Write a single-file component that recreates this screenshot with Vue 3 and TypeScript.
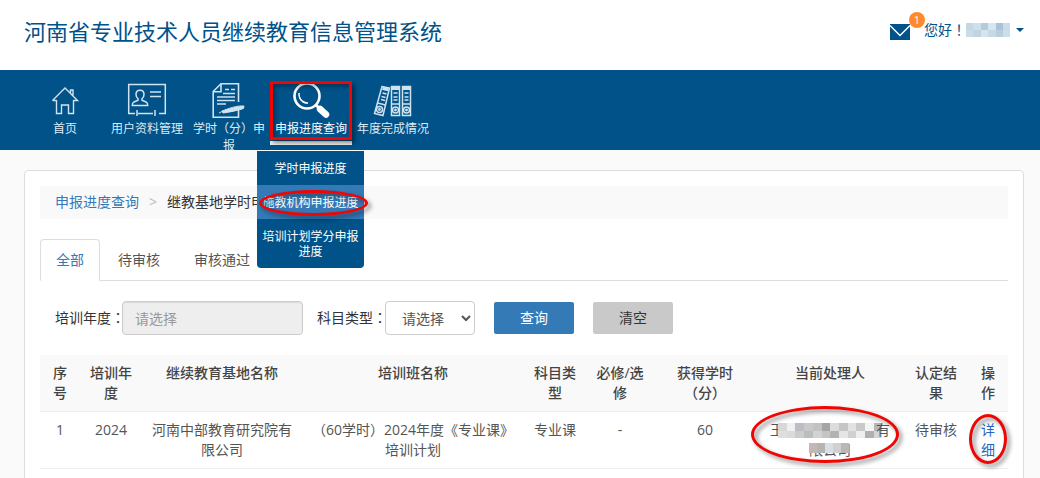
<script setup lang="ts">
import { ref } from 'vue'

interface Row {
  year: string
  base: string
  course: string
  type: string
  required: string
  hours: number
  result: string
}

const columns = [
  { title: '序号', width: 40 },
  { title: '培训年度', width: 62 },
  { title: '继续教育基地名称', width: 160 },
  { title: '培训班名称', width: 222 },
  { title: '科目类型', width: 62 },
  { title: '必修/选修', width: 68 },
  { title: '获得学时（分）', width: 102 },
  { title: '当前处理人', width: 148 },
  { title: '认定结果', width: 64 },
  { title: '操作', width: 40 },
]
const total = columns.reduce((sum, c) => sum + c.width, 0)

const rows: Row[] = [
  {
    year: '2024',
    base: '河南中部教育研究院有限公司',
    course: '（60学时）2024年度《专业课》培训计划',
    type: '专业课',
    required: '-',
    hours: 60,
    result: '待审核',
  },
]

const submenu = ['学时申报进度', '施教机构申报进度', '培训计划学分申报进度']
const tabs = ['全部', '待审核', '审核通过']
const activeTab = ref(0)
const year = ref('')
const subject = ref('')

const nameMask = ['#c3d7e6', '#cfe0ec', '#b4cbdc', '#d6e6f0', '#a9c4d8', '#c9dce9', '#c9dde9', '#c0d4e2', '#d5e5ef', '#c5d9e7', '#b9cfde', '#cadeeb']
const maskTop = ['#d8d8d8', '#f0f0f0', '#bdbdc6', '#c9c9c9', '#c2c2c2', '#a5a5a5', '#dcdcdc', '#c6c6c6', '#e3e3e3', '#c9c9c9', '#f4f4f4', '#b7b7b7', '#dedede', '#dadada', '#cccccc', '#bcbcbc', '#d2d2d2', '#c4c4c4', '#b2b2b2', '#e5e5e5', '#d0d0d0', '#eeeeee', '#b0b0b0', '#d5d5d5']
const maskBottom = ['#c3b9b4', '#b4b4b4', '#d9dfe4', '#d0d0d0', '#b8b8b8']

function clear() {
  year.value = ''
  subject.value = ''
}
</script>

<template>
  <div class="page">
    <header class="top">
      <h1>河南省专业技术人员继续教育信息管理系统</h1>
      <div class="account">
        <a href="#" class="mail" aria-label="消息">
          <svg width="20" height="16" viewBox="0 0 20 16">
            <rect width="20" height="16" fill="#00528a" />
            <path d="M0 1.5 10 11.5 20 1.5" fill="none" stroke="#fff" stroke-width="1.5" />
          </svg>
          <span class="badge">1</span>
        </a>
        <button type="button" class="user">
          <span>您好<span class="mid">！</span></span>
          <svg width="44" height="14" viewBox="0 0 44 14" shape-rendering="crispEdges">
            <rect v-for="(c, i) in nameMask" :key="i" :x="(i % 6) * 7.4" :y="i < 6 ? 0 : 7" width="8" height="7" :fill="c" />
          </svg>
          <svg class="caret" width="8" height="4" viewBox="0 0 8 4"><path d="M0 0h8L4 4z" fill="#00528a" /></svg>
        </button>
      </div>
    </header>

    <nav class="nav">
      <div class="item">
        <a href="#">
          <svg width="40" height="40" viewBox="0 0 40 40" fill="none" stroke="#cfe3f0" stroke-width="1.4">
            <path d="M11.500 20v13.500h5V25h7v8.500h5V20M7.500 20.500 20 8l12.500 12.500h-4M7.500 20.500h4M28 15.500V10h-2.500v3" />
          </svg>
          <span class="label">首页</span>
        </a>
      </div>
      <div class="item">
        <a href="#">
          <svg width="40" height="40" viewBox="0 0 40 40" fill="none" stroke="#cfe3f0" stroke-width="1.500">
            <path d="M8 33.500H1.700v-29h36.600v29H32M11 33.500h15M10 30v6M28 30v6M23 12h11M23 16.500h11" />
            <path d="M13 10.200c-3 0-4 2-4 4.200 0 2 1 3.400 2 4.200v1.700l-4.500 2c-1 .5-1.200 1.500-1.200 3.200h15.400c0-1.700-.2-2.700-1.200-3.200l-4.500-2v-1.700c1-.8 2-2.200 2-4.200 0-2.200-1-4.200-4-4.200z" />
          </svg>
          <span class="label">用户资料管理</span>
        </a>
      </div>
      <div class="item">
        <a href="#">
          <svg width="40" height="40" viewBox="0 0 40 40" fill="none" stroke="#cfe3f0" stroke-width="1.600">
            <path d="M29.500 30v7.200H4.200V11.500L12 3.800h17.500V22" />
            <path d="M12 3.800v8H4.200M16 9.500h4M22 9.500h4M14 13.500h12M8 17h18M8 20.500h18M8 24h9" />
            <path d="M13 31c7-2.500 14-5.500 22-5l-.5 2.500c-6 2-13 3.500-20.500 4.500z" fill="#cfe3f0" stroke-width="1" />
            <path d="M10 33l4-2" stroke-width="1" />
          </svg>
          <span class="label">学时（分）申报</span>
        </a>
      </div>
      <div class="item current">
        <a href="#">
          <svg width="40" height="40" viewBox="0 0 40 40" fill="none" stroke="#fff">
            <circle cx="16" cy="16" r="12.500" stroke-width="2.600" />
            <path d="M8 13c0 5 3 9 9 10-4 1.500-10-3-9-10z" fill="#fff" stroke-width="1" />
            <path d="m24.500 24.500 4 4" stroke-width="3" />
            <path d="m29 29 6 5.500" stroke-width="6.500" stroke-linecap="round" />
          </svg>
          <span class="label">申报进度查询</span>
        </a>
        <span class="mark-box"></span>
        <ul class="menu">
          <li v-for="(m, i) in submenu" :key="m" :class="{ on: i === 1 }">
            <a href="#">{{ m }}</a>
            <span v-if="i === 1" class="mark mark-menu"></span>
          </li>
        </ul>
      </div>
      <div class="item">
        <a href="#">
          <svg width="40" height="40" viewBox="0 0 40 40" fill="none" stroke="#cfe3f0" stroke-width="1.500">
            <path d="M9 6.500 16.500 8 10 35.500l-8.500-2z" />
            <path d="m9.500 13 4 1M8.500 16.500l4 1M8 19.500l4 1M4.500 23l8 2" />
            <path d="m9.500 8.500 6 1.300" stroke-width="3" />
            <circle cx="6.500" cy="29.500" r="3" /><circle cx="6.500" cy="29.500" r=".7" />
            <path d="M18.500 6.500h8v29h-8zM29.500 6.500h8v29h-8zM20.500 13h4M20.500 17h4M20.500 20h4M31.500 13h4M31.500 17h4M31.500 20h4M18.500 24h8M29.500 24h8" />
            <path d="M19 8.500h7.500M30 8.500h7.500" stroke-width="3" />
            <circle cx="22.500" cy="30" r="3" /><circle cx="33.500" cy="30" r="3" />
            <circle cx="22.500" cy="30" r=".7" /><circle cx="33.500" cy="30" r=".7" />
          </svg>
          <span class="label">年度完成情况</span>
        </a>
      </div>
    </nav>

    <main class="card">
      <div class="crumbs">
        <a href="#">申报进度查询</a>
        <span class="sep">&gt;</span>
        <span>继教基地学时申报进度</span>
      </div>

      <div class="tabs" role="tablist">
        <button v-for="(t, i) in tabs" :key="t" type="button" role="tab" :aria-selected="i === activeTab" :class="{ active: i === activeTab }" @click="activeTab = i">{{ t }}</button>
      </div>

      <form class="filters" @submit.prevent>
        <label for="year">培训年度<span class="mid">：</span></label>
        <input id="year" v-model="year" type="text" placeholder="请选择" readonly />
        <label for="subject" class="second">科目类型<span class="mid">：</span></label>
        <select id="subject" v-model="subject">
          <option value="">请选择</option>
          <option value="专业课">专业课</option>
        </select>
        <button type="submit" class="primary">查询</button>
        <button type="button" @click="clear">清空</button>
      </form>

      <table>
        <colgroup>
          <col v-for="c in columns" :key="c.title" :style="{ width: (c.width / total) * 100 + '%' }" />
        </colgroup>
        <thead>
          <tr><th v-for="c in columns" :key="c.title" scope="col">{{ c.title }}</th></tr>
        </thead>
        <tbody>
          <tr v-for="(r, i) in rows" :key="i">
            <td>{{ i + 1 }}</td>
            <td>{{ r.year }}</td>
            <td>{{ r.base }}</td>
            <td>{{ r.course }}</td>
            <td>{{ r.type }}</td>
            <td>{{ r.required }}</td>
            <td>{{ r.hours }}</td>
            <td class="handler">
              <div class="masked">
                <span>王</span>
                <svg width="104" height="15" viewBox="0 0 104 15" shape-rendering="crispEdges">
                  <rect v-for="(c, k) in maskTop" :key="k" :x="(k % 12) * 8.7" :y="k < 12 ? 0 : 7.5" width="9" height="8" :fill="c" />
                </svg>
                <span>有</span>
              </div>
              <div class="masked">
                <span class="covered">限公司
                  <svg width="40" height="10" viewBox="0 0 40 10" shape-rendering="crispEdges">
                    <rect v-for="(c, k) in maskBottom" :key="k" :x="k * 8" width="8" height="10" :fill="c" />
                  </svg>
                </span>
              </div>
              <span class="mark mark-handler"></span>
            </td>
            <td>{{ r.result }}</td>
            <td class="action"><a href="#">详细</a><span class="mark mark-action"></span></td>
          </tr>
        </tbody>
      </table>
    </main>
  </div>
</template>

<style>
html,
body {
  margin: 0;
  background: #fafafa;
  overflow: hidden;
}
</style>

<style scoped>
* {
  box-sizing: border-box;
}
.page {
  font: 14px/20px "Open Sans", "Noto Sans CJK SC", sans-serif;
  color: #333;
}
.mid {
  font-family: "Noto Sans CJK TC", sans-serif;
  line-height: 1;
}
a {
  color: #337ab7;
  text-decoration: none;
}
button,
input,
select {
  font: inherit;
}
.top {
  display: flex;
  justify-content: space-between;
  height: 70px;
  padding: 15px 16px 0 24px;
  background: #fff;
  color: #00528a;
}
h1 {
  margin: 0;
  font-size: 22px;
  line-height: 32px;
  font-weight: 400;
}
.account {
  display: flex;
  align-items: flex-start;
}
.mail {
  position: relative;
  padding-top: 9px;
  margin-right: 14px;
}
.mail svg {
  display: block;
}
.badge {
  position: absolute;
  top: -3px;
  right: -15px;
  width: 16px;
  height: 16px;
  border-radius: 8px;
  background: #fe8a2b;
  color: #fff;
  font-size: 11px;
  line-height: 16px;
  text-align: center;
}
.user {
  display: flex;
  align-items: center;
  padding: 5px 0;
  border: 0;
  background: none;
  color: #00528a;
  line-height: 20px;
}
.user svg {
  display: block;
}
.caret {
  margin-left: 6px;
}
.nav {
  display: flex;
  height: 80px;
  padding-left: 24px;
  background: #005288;
}
.item {
  position: relative;
  width: 82px;
}
.item > a {
  display: block;
  height: 80px;
  padding: 10px 5px 0;
  overflow: hidden;
  text-align: center;
  font-size: 12px;
  line-height: 17px;
  color: #dcebf5;
}
.item svg {
  display: block;
  margin: 0 auto;
}
.label {
  display: block;
}
.current > a {
  height: 75px;
  border-bottom: 4px solid #eee;
  color: #fff;
}
.mark-box {
  position: absolute;
  inset: 11px 0 10px 0;
  border: 3px solid #f00505;
  box-shadow: 3px 3px 4px rgba(0, 0, 0, 0.4), inset 3px 3px 4px rgba(0, 0, 0, 0.3);
  pointer-events: none;
}
.menu {
  position: absolute;
  z-index: 2;
  top: 81px;
  left: 50%;
  width: 107px;
  margin: 0 0 0 -54px;
  padding: 0;
  list-style: none;
  border-radius: 0 0 4px 4px;
  background: #005288;
}
.menu li {
  position: relative;
}
.menu a {
  display: block;
  padding: 10px 5px 9px;
  color: #fff;
  font-size: 12px;
  line-height: 15px;
  text-align: center;
}
.menu .on {
  background: #337ab7;
}
.mark {
  position: absolute;
  border: 3px solid #f00505;
  border-radius: 50%;
  filter: drop-shadow(3px 3px 2px rgba(0, 0, 0, 0.45));
  pointer-events: none;
}
.mark-menu {
  inset: 5px -4px 3px 2px;
}
.card {
  min-height: 330px;
  margin: 20px 16px 0 24px;
  padding: 15px;
  border: 1px solid #ddd;
  border-radius: 4px;
  background: #fff;
}
.crumbs {
  display: flex;
  padding: 6px 15px 7px;
  background: #f9f9f9;
}
.sep {
  width: 28px;
  text-align: center;
  color: #bbb;
}
.tabs {
  display: flex;
  gap: 2px;
  margin-top: 20px;
  border-bottom: 1px solid #ddd;
}
.tabs button {
  margin-bottom: -1px;
  padding: 10px 15px;
  border: 1px solid transparent;
  border-radius: 4px 4px 0 0;
  background: none;
  color: #555;
}
.tabs .active {
  border-color: #ddd #ddd #fff;
  background: #fff;
  color: #337ab7;
}
.filters {
  display: flex;
  align-items: center;
  padding: 20px 0 20px 15px;
}
.filters label {
  width: 67px;
  white-space: nowrap;
}
.filters .second {
  width: 68px;
  margin-left: 14px;
}
.filters input,
.filters select {
  height: 34px;
  border: 1px solid #ccc;
  border-radius: 4px;
  background: #fff;
  color: #555;
}
.filters input {
  width: 181px;
  padding: 6px 12px;
  background: #eee;
  box-shadow: inset 0 1px 1px rgba(0, 0, 0, 0.08);
}
.filters input::placeholder {
  color: #999;
}
.filters select {
  width: 90px;
  padding: 6px 0 6px 12px;
}
.filters button {
  width: 80px;
  height: 32px;
  margin-left: 19px;
  padding: 0;
  border: 0;
  border-radius: 2px;
  background: #c9c9c9;
  color: #333;
}
.filters .primary {
  background: #337ab7;
  color: #fff;
}
table {
  width: 100%;
  table-layout: fixed;
  border-collapse: separate;
  border-spacing: 0;
  text-align: center;
  color: #555;
}
th,
td {
  padding: 8px;
  vertical-align: top;
  border-bottom: 1px solid #eee;
}
th {
  background: #f9f9f9;
  font-weight: 500;
  color: #444;
}
.handler,
.action {
  position: relative;
}
.handler {
  padding: 8px 0;
}
.action a {
  color: #1f66c1;
}
.masked {
  display: flex;
  justify-content: center;
  align-items: center;
  height: 20px;
}
.masked > svg {
  margin: 0 -6px;
}
.covered {
  position: relative;
}
.covered svg {
  position: absolute;
  left: 0;
  top: 3px;
}
.mark-handler {
  inset: -6px 5px 5px -5px;
}
.mark-action {
  inset: 2px 1px 4px 1px;
}
</style>
